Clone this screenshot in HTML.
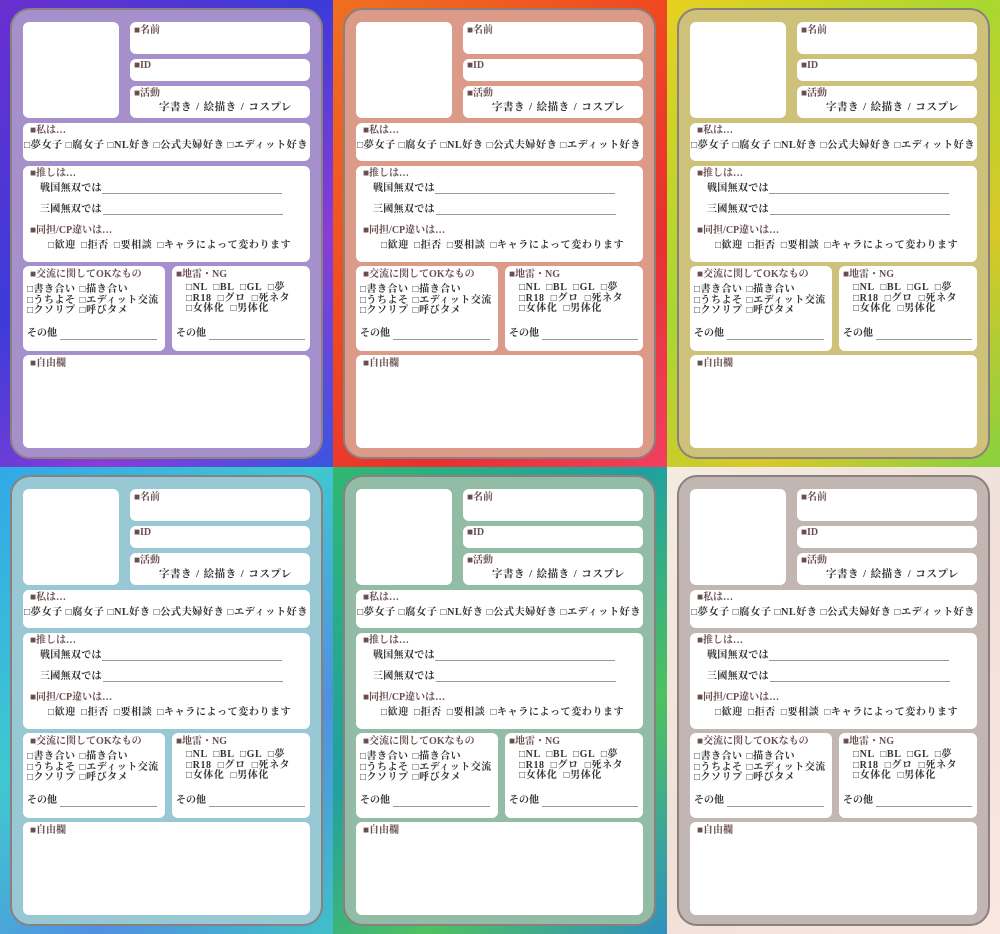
<!DOCTYPE html>
<html><head><meta charset="utf-8"><style>
*{margin:0;padding:0;box-sizing:border-box}
body{width:1000px;height:933px;overflow:hidden;position:relative;background:#fff;font-family:"Liberation Serif","Noto Serif CJK SC","Noto Sans CJK JP",serif;font-weight:bold;color:#333}
.p{position:absolute;width:334px;height:467px;overflow:hidden}
.card{position:absolute;left:10px;top:8px;width:313px;height:451px;border-radius:20px;border:2px solid #8a8080;background:var(--c)}
.b{position:absolute;background:#fff;border-radius:6px}
.t{position:absolute;white-space:nowrap;font-size:10px;line-height:12px}
.l{color:#6a4e50}
.ln{position:absolute;height:1px;background:#999}
.b1{left:23px;top:22px;width:96px;height:96px}
.b2{left:130px;top:22px;width:180px;height:32px}
.b3{left:130px;top:59px;width:180px;height:22px}
.b4{left:130px;top:86px;width:180px;height:32px}
.b5{left:23px;top:123px;width:287px;height:38px}
.b6{left:23px;top:166px;width:287px;height:96px}
.b7{left:23px;top:266px;width:142px;height:85px}
.b8{left:172px;top:266px;width:138px;height:85px}
.b9{left:23px;top:355px;width:287px;height:93px}
.t1{left:134px;top:25px}.t2{left:134px;top:60px}.t3{left:134px;top:88px}
.ta{left:159px;top:102px;font-size:10.5px;letter-spacing:0.5px;word-spacing:1px}
.t4{left:30px;top:125px}
.tw{left:24px;top:140px;font-size:10.3px;letter-spacing:0.4px}
.t5{left:30px;top:168px}
.s1{left:40px;top:183px;letter-spacing:0.3px}.s2{left:40px;top:204px;letter-spacing:0.3px}
.l1{left:102px;top:193px;width:180px}.l2{left:103px;top:214px;width:180px}
.t6{left:30px;top:225px}
.td{left:48px;top:240px;letter-spacing:0.6px;word-spacing:2px}
.t7{left:30px;top:269px}
.tk{left:27px;top:285px;line-height:10.5px;letter-spacing:0.5px;word-spacing:1px}
.o1{left:27px;top:328px}.l3{left:60px;top:339px;width:97px}
.t8{left:176px;top:269px}
.tn{left:186px;top:283px;line-height:10.5px;letter-spacing:0.6px;word-spacing:3px}
.o2{left:176px;top:328px}.l4{left:209px;top:339px;width:96px}
.t9{left:30px;top:358px}
</style></head><body>

<div class="p" style="left:0;top:0;background:linear-gradient(135deg,#6a2fd0,#3b3bd8 40%,#8a3cd6 70%,#3a55e0)"><div class="card" style="--c:#a590cc"></div>
<div class="b b1"></div><div class="b b2"></div><div class="b b3"></div><div class="b b4"></div><div class="b b5"></div><div class="b b6"></div><div class="b b7"></div><div class="b b8"></div><div class="b b9"></div>
<div class="t l t1">■名前</div><div class="t l t2">■ID</div><div class="t l t3">■活動</div>
<div class="t ta">字書き / 絵描き / コスプレ</div>
<div class="t l t4">■私は…</div>
<div class="t tw">□夢女子 □腐女子 □NL好き □公式夫婦好き □エディット好き</div>
<div class="t l t5">■推しは…</div>
<div class="t s1">戦国無双では</div><div class="ln l1"></div>
<div class="t s2">三國無双では</div><div class="ln l2"></div>
<div class="t l t6">■同担/CP違いは…</div>
<div class="t td">□歓迎 □拒否 □要相談 □キャラによって変わります</div>
<div class="t l t7">■交流に関してOKなもの</div>
<div class="t tk">□書き合い □描き合い<br>□うちよそ □エディット交流<br>□クソリプ □呼びタメ</div>
<div class="t o1">その他</div><div class="ln l3"></div>
<div class="t l t8">■地雷・NG</div>
<div class="t tn">□NL □BL □GL □夢<br>□R18 □グロ □死ネタ<br>□女体化 □男体化</div>
<div class="t o2">その他</div><div class="ln l4"></div>
<div class="t l t9">■自由欄</div>
</div>

<div class="p" style="left:333px;top:0;background:linear-gradient(135deg,#f07020,#f04a20 40%,#e83030 70%,#f04060)"><div class="card" style="--c:#dc9a88"></div>
<div class="b b1"></div><div class="b b2"></div><div class="b b3"></div><div class="b b4"></div><div class="b b5"></div><div class="b b6"></div><div class="b b7"></div><div class="b b8"></div><div class="b b9"></div>
<div class="t l t1">■名前</div><div class="t l t2">■ID</div><div class="t l t3">■活動</div>
<div class="t ta">字書き / 絵描き / コスプレ</div>
<div class="t l t4">■私は…</div>
<div class="t tw">□夢女子 □腐女子 □NL好き □公式夫婦好き □エディット好き</div>
<div class="t l t5">■推しは…</div>
<div class="t s1">戦国無双では</div><div class="ln l1"></div>
<div class="t s2">三國無双では</div><div class="ln l2"></div>
<div class="t l t6">■同担/CP違いは…</div>
<div class="t td">□歓迎 □拒否 □要相談 □キャラによって変わります</div>
<div class="t l t7">■交流に関してOKなもの</div>
<div class="t tk">□書き合い □描き合い<br>□うちよそ □エディット交流<br>□クソリプ □呼びタメ</div>
<div class="t o1">その他</div><div class="ln l3"></div>
<div class="t l t8">■地雷・NG</div>
<div class="t tn">□NL □BL □GL □夢<br>□R18 □グロ □死ネタ<br>□女体化 □男体化</div>
<div class="t o2">その他</div><div class="ln l4"></div>
<div class="t l t9">■自由欄</div>
</div>

<div class="p" style="left:667px;top:0;background:linear-gradient(135deg,#e8d020,#a8d830 40%,#d8c828 70%,#88d040)"><div class="card" style="--c:#cec27a"></div>
<div class="b b1"></div><div class="b b2"></div><div class="b b3"></div><div class="b b4"></div><div class="b b5"></div><div class="b b6"></div><div class="b b7"></div><div class="b b8"></div><div class="b b9"></div>
<div class="t l t1">■名前</div><div class="t l t2">■ID</div><div class="t l t3">■活動</div>
<div class="t ta">字書き / 絵描き / コスプレ</div>
<div class="t l t4">■私は…</div>
<div class="t tw">□夢女子 □腐女子 □NL好き □公式夫婦好き □エディット好き</div>
<div class="t l t5">■推しは…</div>
<div class="t s1">戦国無双では</div><div class="ln l1"></div>
<div class="t s2">三國無双では</div><div class="ln l2"></div>
<div class="t l t6">■同担/CP違いは…</div>
<div class="t td">□歓迎 □拒否 □要相談 □キャラによって変わります</div>
<div class="t l t7">■交流に関してOKなもの</div>
<div class="t tk">□書き合い □描き合い<br>□うちよそ □エディット交流<br>□クソリプ □呼びタメ</div>
<div class="t o1">その他</div><div class="ln l3"></div>
<div class="t l t8">■地雷・NG</div>
<div class="t tn">□NL □BL □GL □夢<br>□R18 □グロ □死ネタ<br>□女体化 □男体化</div>
<div class="t o2">その他</div><div class="ln l4"></div>
<div class="t l t9">■自由欄</div>
</div>

<div class="p" style="left:0;top:467px;background:linear-gradient(135deg,#30a8e8,#40c8d0 40%,#5090e0 70%,#40c0c8)"><div class="card" style="--c:#98c8d4"></div>
<div class="b b1"></div><div class="b b2"></div><div class="b b3"></div><div class="b b4"></div><div class="b b5"></div><div class="b b6"></div><div class="b b7"></div><div class="b b8"></div><div class="b b9"></div>
<div class="t l t1">■名前</div><div class="t l t2">■ID</div><div class="t l t3">■活動</div>
<div class="t ta">字書き / 絵描き / コスプレ</div>
<div class="t l t4">■私は…</div>
<div class="t tw">□夢女子 □腐女子 □NL好き □公式夫婦好き □エディット好き</div>
<div class="t l t5">■推しは…</div>
<div class="t s1">戦国無双では</div><div class="ln l1"></div>
<div class="t s2">三國無双では</div><div class="ln l2"></div>
<div class="t l t6">■同担/CP違いは…</div>
<div class="t td">□歓迎 □拒否 □要相談 □キャラによって変わります</div>
<div class="t l t7">■交流に関してOKなもの</div>
<div class="t tk">□書き合い □描き合い<br>□うちよそ □エディット交流<br>□クソリプ □呼びタメ</div>
<div class="t o1">その他</div><div class="ln l3"></div>
<div class="t l t8">■地雷・NG</div>
<div class="t tn">□NL □BL □GL □夢<br>□R18 □グロ □死ネタ<br>□女体化 □男体化</div>
<div class="t o2">その他</div><div class="ln l4"></div>
<div class="t l t9">■自由欄</div>
</div>

<div class="p" style="left:333px;top:467px;background:linear-gradient(135deg,#30b870,#20a0a0 40%,#50c060 70%,#3090c0)"><div class="card" style="--c:#92bca6"></div>
<div class="b b1"></div><div class="b b2"></div><div class="b b3"></div><div class="b b4"></div><div class="b b5"></div><div class="b b6"></div><div class="b b7"></div><div class="b b8"></div><div class="b b9"></div>
<div class="t l t1">■名前</div><div class="t l t2">■ID</div><div class="t l t3">■活動</div>
<div class="t ta">字書き / 絵描き / コスプレ</div>
<div class="t l t4">■私は…</div>
<div class="t tw">□夢女子 □腐女子 □NL好き □公式夫婦好き □エディット好き</div>
<div class="t l t5">■推しは…</div>
<div class="t s1">戦国無双では</div><div class="ln l1"></div>
<div class="t s2">三國無双では</div><div class="ln l2"></div>
<div class="t l t6">■同担/CP違いは…</div>
<div class="t td">□歓迎 □拒否 □要相談 □キャラによって変わります</div>
<div class="t l t7">■交流に関してOKなもの</div>
<div class="t tk">□書き合い □描き合い<br>□うちよそ □エディット交流<br>□クソリプ □呼びタメ</div>
<div class="t o1">その他</div><div class="ln l3"></div>
<div class="t l t8">■地雷・NG</div>
<div class="t tn">□NL □BL □GL □夢<br>□R18 □グロ □死ネタ<br>□女体化 □男体化</div>
<div class="t o2">その他</div><div class="ln l4"></div>
<div class="t l t9">■自由欄</div>
</div>

<div class="p" style="left:667px;top:467px;background:linear-gradient(135deg,#f4ece0,#f0e0d8 50%,#f8e8e0)"><div class="card" style="--c:#c2b6b2"></div>
<div class="b b1"></div><div class="b b2"></div><div class="b b3"></div><div class="b b4"></div><div class="b b5"></div><div class="b b6"></div><div class="b b7"></div><div class="b b8"></div><div class="b b9"></div>
<div class="t l t1">■名前</div><div class="t l t2">■ID</div><div class="t l t3">■活動</div>
<div class="t ta">字書き / 絵描き / コスプレ</div>
<div class="t l t4">■私は…</div>
<div class="t tw">□夢女子 □腐女子 □NL好き □公式夫婦好き □エディット好き</div>
<div class="t l t5">■推しは…</div>
<div class="t s1">戦国無双では</div><div class="ln l1"></div>
<div class="t s2">三國無双では</div><div class="ln l2"></div>
<div class="t l t6">■同担/CP違いは…</div>
<div class="t td">□歓迎 □拒否 □要相談 □キャラによって変わります</div>
<div class="t l t7">■交流に関してOKなもの</div>
<div class="t tk">□書き合い □描き合い<br>□うちよそ □エディット交流<br>□クソリプ □呼びタメ</div>
<div class="t o1">その他</div><div class="ln l3"></div>
<div class="t l t8">■地雷・NG</div>
<div class="t tn">□NL □BL □GL □夢<br>□R18 □グロ □死ネタ<br>□女体化 □男体化</div>
<div class="t o2">その他</div><div class="ln l4"></div>
<div class="t l t9">■自由欄</div>
</div>

</body></html>
